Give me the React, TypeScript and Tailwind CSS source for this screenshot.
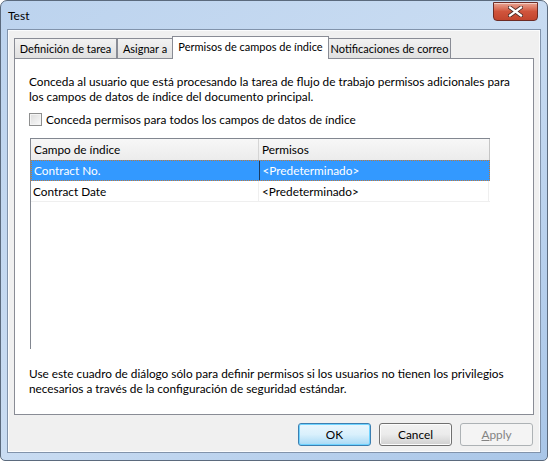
import React from "react";

const tabs = [
  { label: "Definición de tarea", w: "w-[103px]" },
  { label: "Asignar a", w: "w-[56px]" },
  { label: "Permisos de campos de índice", w: "w-[157px]", active: true },
  { label: "Notificaciones de correo", w: "w-[123px]" },
];

const rows = [
  { field: "Contract No.", perm: "<Predeterminado>", selected: true },
  { field: "Contract Date", perm: "<Predeterminado>" },
];

function CloseButton() {
  return (
    <div className="mt-[1px] mr-[9px] flex h-[19px] w-[45px] items-center justify-center rounded-b-[4px] border border-[#6d2c25] bg-gradient-to-b from-[#e8a493] via-[#d0543c] to-[#c2452e] shadow-[inset_0_1px_0_rgba(255,255,255,0.5)]">
      <svg width="15" height="11" viewBox="0 0 15 11">
        <path
          d="M2 1.5 L13 9.5 M13 1.5 L2 9.5"
          stroke="#4a2a26"
          strokeWidth="4"
          strokeLinecap="square"
        />
        <path
          d="M2 1.5 L13 9.5 M13 1.5 L2 9.5"
          stroke="#ffffff"
          strokeWidth="2.2"
          strokeLinecap="square"
        />
      </svg>
    </div>
  );
}

function Button({
  children,
  primary,
  disabled,
}: {
  children: React.ReactNode;
  primary?: boolean;
  disabled?: boolean;
}) {
  const base =
    "flex h-[23px] w-[73px] items-center justify-center rounded-[3px] border text-[11.8px]";
  if (disabled)
    return (
      <div className={`${base} border-[#adb2b5] bg-[#f4f4f4] text-[#838383]`}>
        {children}
      </div>
    );
  if (primary)
    return (
      <div
        className={`${base} border-[#3c7fb1] bg-gradient-to-b from-[#eaf6fd] via-[#d9f0fc] to-[#a7d9f5] text-black shadow-[inset_0_0_0_1px_#6fd3ff]`}
      >
        {children}
      </div>
    );
  return (
    <div
      className={`${base} border-[#707070] bg-gradient-to-b from-[#f2f2f2] via-[#ebebeb] to-[#cfcfcf] text-black shadow-[inset_0_0_0_1px_#fcfcfc]`}
    >
      {children}
    </div>
  );
}

export default function App() {
  return (
    <div className="h-[461px] w-[548px] overflow-hidden whitespace-nowrap bg-white font-['Lato',sans-serif]">
      <div className="flex h-[461px] w-[548px] flex-col rounded-t-[7px] rounded-b-[5px] border border-[#5b6a7d] bg-gradient-to-br from-[#bcd3ee] via-[#c9dcf2] to-[#a9c6e8]">
        {/* title bar */}
        <div className="flex h-[28px] items-start justify-between">
          <span className="ml-[7px] mt-[7px] text-[12px] leading-[15px] text-black">
            Test
          </span>
          <CloseButton />
        </div>

        {/* client area */}
        <div className="mx-[6px] mb-[7px] flex flex-1 flex-col border border-[#8193ab] bg-[#f0f0f0]">
          <div className="flex flex-1 flex-col border border-[#fbfcfd] px-[5px] pt-[5px]">
            {/* tabs */}
            <div className="relative z-10 flex h-[22px] items-end">
              {tabs.map((t) =>
                t.active ? (
                  <div
                    key={t.label}
                    className={`${t.w} -mx-[1px] mb-[-1px] flex h-[23px] items-start justify-center border border-b-0 border-[#898c95] bg-white pt-[2px] text-[11px] leading-[15px] text-black`}
                  >
                    {t.label}
                  </div>
                ) : (
                  <div
                    key={t.label}
                    className={`${t.w} flex h-[20px] items-center justify-center border border-b-0 border-[#898c95] bg-gradient-to-b from-[#f2f2f2] to-[#e0e0e0] text-[11px] leading-[15px] text-black`}
                  >
                    {t.label}
                  </div>
                )
              )}
            </div>

            {/* tab page */}
            <div className="flex h-[357px] flex-col border border-[#898c95] bg-white px-[14px] pt-[15px] text-[11.8px] leading-[15px] text-black">
              <p>
                Conceda al usuario que está procesando la tarea de flujo de
                trabajo permisos adicionales para
                <br />
                los campos de datos de índice del documento principal.
              </p>
              <div className="mt-[8px] flex items-center gap-[4px]">
                <div className="h-[13px] w-[13px] border border-[#8e8f8f] bg-gradient-to-br from-[#dcdcdc] to-[#fafafa] shadow-[inset_0_0_0_1px_#f4f4f4]" />
                <span>
                  Conceda permisos para todos los campos de datos de índice
                </span>
              </div>

              {/* list view */}
              <div className="ml-[1px] mt-[11px] h-[211px] w-[460px] border-l border-t border-[#828790]">
                <div className="flex h-[21px] bg-gradient-to-b from-[#f7f7f7] to-[#ececec]">
                  <div className="flex w-[228px] items-center border-r border-[#d5d5d5] pl-[3px]">
                    Campo de índice
                  </div>
                  <div className="flex w-[231px] items-center border-r border-[#c5c5c5] pl-[3px]">
                    Permisos
                  </div>
                </div>
                {rows.map((r) => (
                  <div
                    key={r.field}
                    className={`flex h-[21px] ${
                      r.selected
                        ? "border border-dotted border-[#c07a3a] bg-[#3399ff] text-white"
                        : "border-b border-[#efefef] text-black"
                    }`}
                  >
                    <div
                      className={`flex w-[228px] items-center pl-[2px] ${
                        r.selected ? "border-r border-[#1a3c63]" : "border-r border-[#efefef]"
                      }`}
                    >
                      {r.field}
                    </div>
                    <div
                      className={`flex w-[230px] items-center pl-[3px] ${
                        r.selected ? "" : "border-r border-[#efefef]"
                      }`}
                    >
                      {r.perm}
                    </div>
                  </div>
                ))}
              </div>

              <p className="mt-[17px]">
                Use este cuadro de diálogo sólo para definir permisos si los
                usuarios no tienen los privilegios
                <br />
                necesarios a través de la configuración de seguridad estándar.
              </p>
            </div>

            {/* buttons */}
            <div className="mt-[8px] flex justify-end gap-[8px] pr-[1px]">
              <Button primary>OK</Button>
              <Button>Cancel</Button>
              <Button disabled>
                <span>
                  <span className="underline">A</span>pply
                </span>
              </Button>
            </div>
          </div>
        </div>
      </div>
    </div>
  );
}
